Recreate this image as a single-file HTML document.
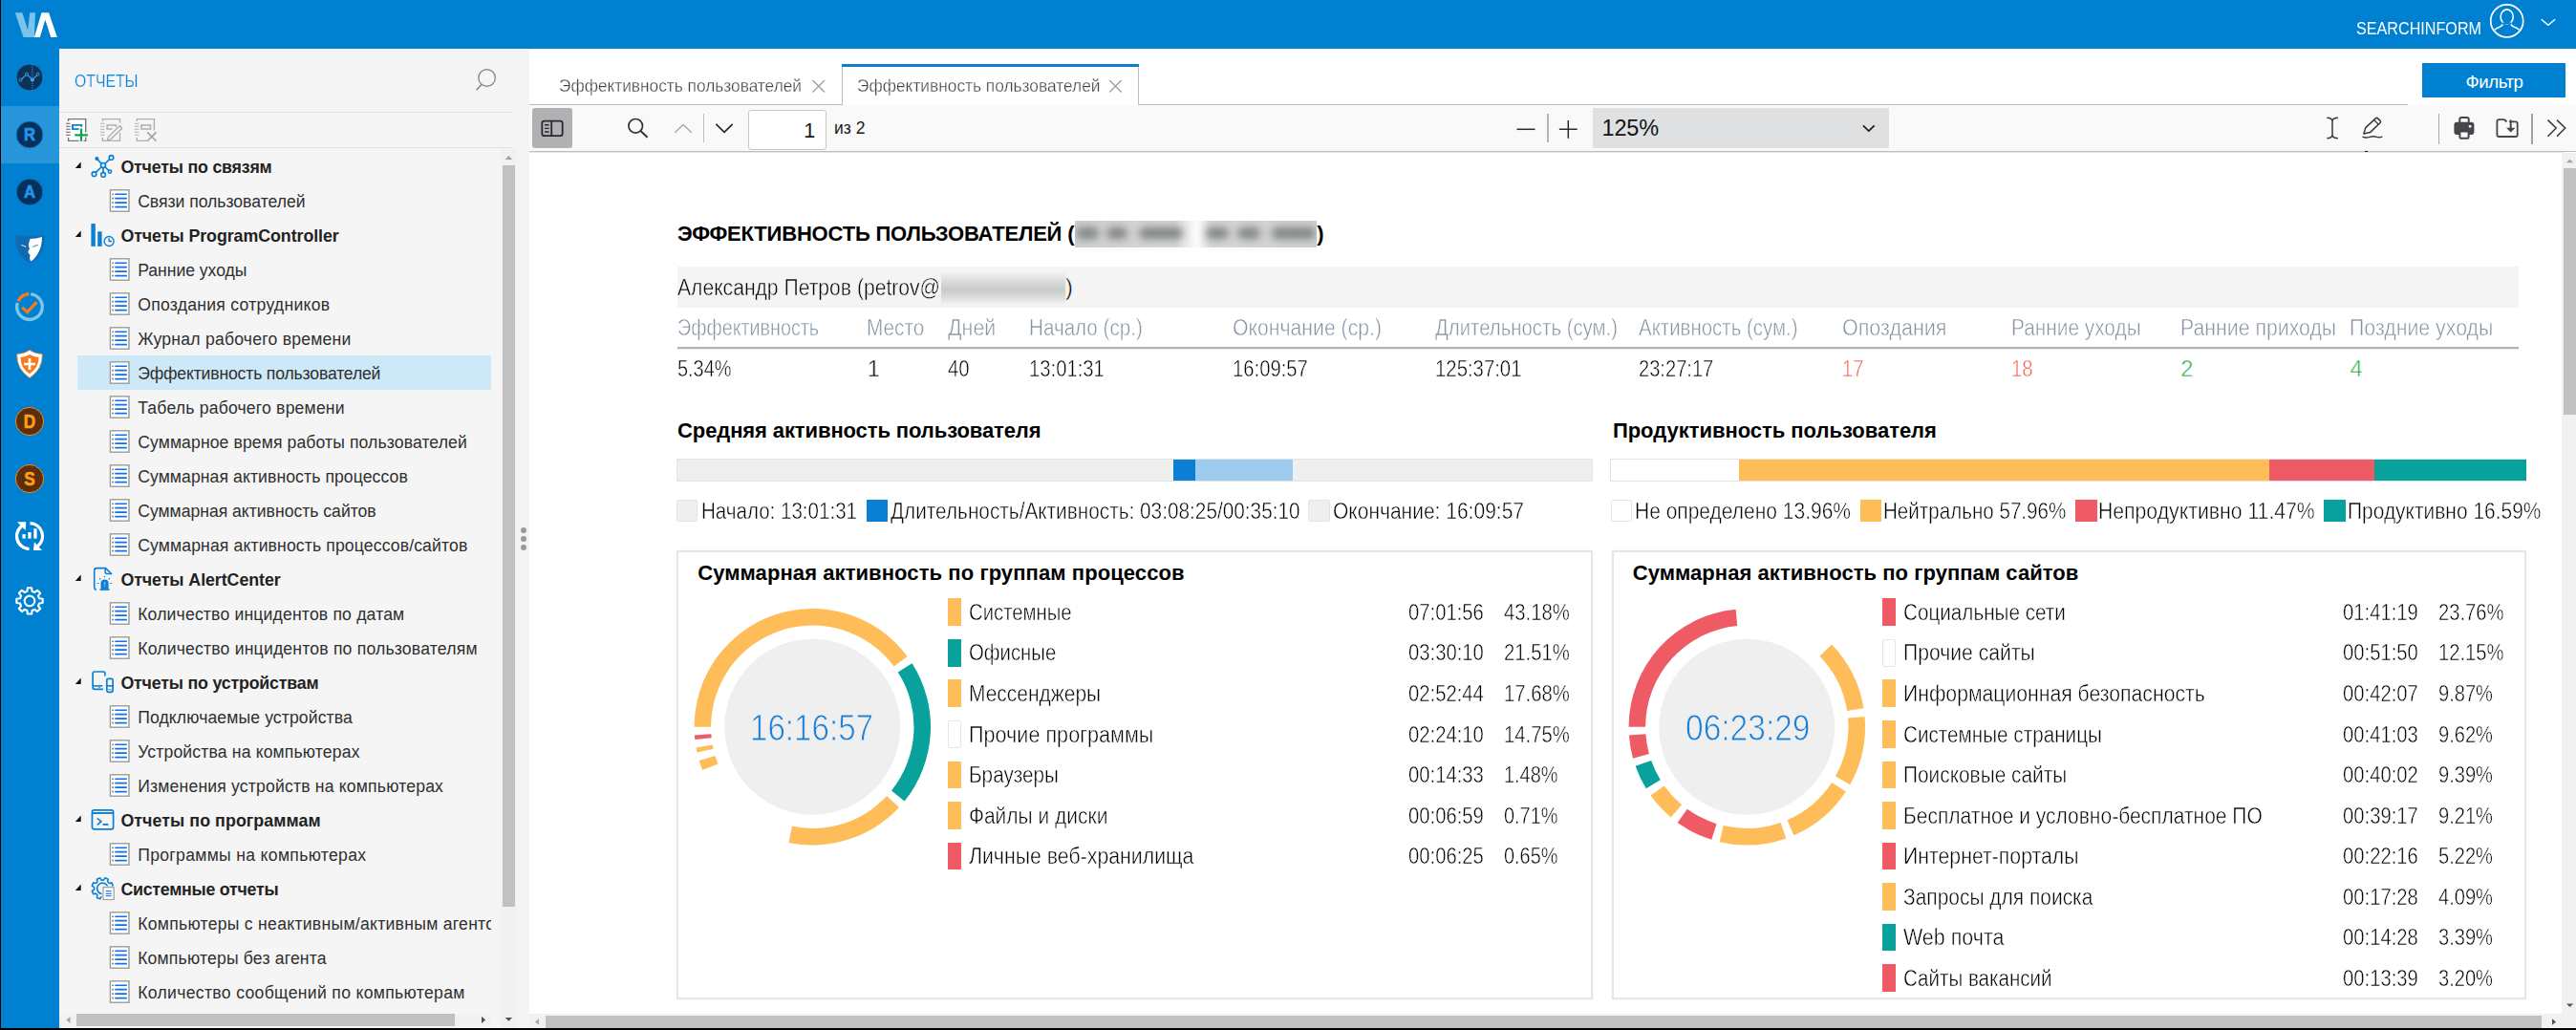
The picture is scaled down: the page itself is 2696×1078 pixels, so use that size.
<!DOCTYPE html>
<html><head><meta charset="utf-8"><title>Reports</title>
<style>
html,body{margin:0;padding:0;}
body{width:2696px;height:1078px;overflow:hidden;background:#fff;position:relative;font-family:"Liberation Sans",sans-serif;}
.b{position:absolute;display:block;}
.t{position:absolute;white-space:nowrap;line-height:1;display:block;}
</style></head><body>
<div class="b" style="left:0.00px;top:0.00px;width:2696.00px;height:51.00px;background:#0080d0;"></div>
<div class="b" style="left:0.00px;top:51.00px;width:62.00px;height:1027.00px;background:#0080d0;"></div>
<div class="b" style="left:0.00px;top:111.00px;width:62.00px;height:59.50px;background:#2795da;"></div>
<div class="b" style="left:0.00px;top:0.00px;width:1.00px;height:1078.00px;background:#000;"></div>
<svg class="b" style="left:12px;top:10px;" width="52" height="32" viewBox="12 10 52 32"><path d="M15.800 13.300L23.400 13.300L29.100 31.500L31.200 13.300L37 13.300L35.900 39.100L24.500 39.100Z" fill="#7cc3ea"/><path d="M35.900 39.100L43.500 13.300L51.100 13.300L59.800 39.100L53.300 39.100L47.300 20.700L41.800 39.100Z" fill="#fff"/></svg>
<span class="t" id="t1" style="left:2466.00px;top:20px;line-height:20px;font-size:17.60px;color:#fff;transform:scaleX(0.9179);transform-origin:0 0;">SEARCHINFORM</span>
<svg class="b" style="left:2604px;top:2px;" width="40" height="40" viewBox="2604 2 40 40"><circle cx="2623.700" cy="21.900" r="17" fill="none" stroke="#fff" stroke-width="1.700"/><ellipse cx="2623.700" cy="17.600" rx="6.600" ry="7.700" fill="none" stroke="#fff" stroke-width="1.600"/><path d="M2619.900 24C2619.600 26.500 2618.500 27.300 2616 28.200C2613.500 29 2612 29.800 2610.800 31.300" fill="none" stroke="#fff" stroke-width="1.600"/><path d="M2627.500 24C2627.800 26.500 2628.900 27.300 2631.400 28.200C2633.900 29 2635.400 29.800 2636.600 31.300" fill="none" stroke="#fff" stroke-width="1.600"/><rect x="2619" y="23.400" width="9.400" height="2.200" fill="#0080d0"/></svg>
<svg class="b" style="left:2656px;top:16px;" width="22" height="16" viewBox="2656 16 22 16"><path d="M2659.700 20.300L2666.900 26.300L2674.200 20.300" fill="none" stroke="#fff" stroke-width="1.400"/></svg>
<svg class="b" style="left:13px;top:63px;" width="36" height="36" viewBox="13 63 36 36"><circle cx="31" cy="81" r="14" fill="#0b3358" stroke="#1689dc" stroke-width="0.800"/><path d="M33.900 67.500V94.500" stroke="#4aa6e6" stroke-width="0.900" stroke-dasharray="1.200 1.200"/><path d="M21.700 83.700L28 77.700L33.900 83.500L39.700 77.700" fill="none" stroke="#4aa6e6" stroke-width="1.100"/><circle cx="21.700" cy="83.700" r="1.500" fill="#0b3358" stroke="#4aa6e6" stroke-width="0.900"/><circle cx="28" cy="77.700" r="1.500" fill="#0b3358" stroke="#4aa6e6" stroke-width="0.900"/><circle cx="33.900" cy="83.500" r="2" fill="#4aa6e6"/><circle cx="39.700" cy="77.700" r="1.500" fill="#0b3358" stroke="#4aa6e6" stroke-width="0.900"/></svg>
<svg class="b" style="left:13px;top:122.8px;" width="36" height="36" viewBox="13 122.8 36 36"><circle cx="31" cy="140.8" r="13.9" fill="#06315a" stroke="#0f74c4" stroke-width="1"/><text transform="translate(31 146.82) scale(0.95 1)" text-anchor="middle" font-family="Liberation Sans, sans-serif" font-weight="bold" font-size="17.5" fill="#2496ea" stroke="#2496ea" stroke-width="0.600">R</text></svg>
<svg class="b" style="left:13px;top:183px;" width="36" height="36" viewBox="13 183 36 36"><circle cx="31" cy="201" r="13.9" fill="#06315a" stroke="#0f74c4" stroke-width="1"/><text transform="translate(31 207.02) scale(0.95 1)" text-anchor="middle" font-family="Liberation Sans, sans-serif" font-weight="bold" font-size="17.5" fill="#2496ea" stroke="#2496ea" stroke-width="0.600">A</text></svg>
<svg class="b" style="left:13px;top:243px;" width="36" height="36" viewBox="13 243 36 36"><path d="M16.100 246.300Q31 249.200 46.200 246.300Q46.800 261 39.500 269.500Q35.500 273.800 31.500 275Q27 273.500 23 268.800Q16.300 260.500 16.100 246.300Z" fill="#1467b1"/><path d="M31.500 250.100Q38 249.600 44 247.900Q43.800 255 42.500 259Q39.500 268.500 32.600 273.500Q30.800 272 31.200 269.600L31.500 267L29.100 263.700L31 260.400Q29.500 257 29.900 255.500Q30.800 252.500 31.500 250.100Z" fill="#fff"/><path d="M22.300 256.600Q25 256.800 27.200 258.500" stroke="#fff" stroke-width="0.900" fill="none"/><path d="M34.200 258.500Q36.500 256.800 39.700 256.600" stroke="#1467b1" stroke-width="0.900" fill="none"/></svg>
<svg class="b" style="left:13px;top:303px;" width="36" height="36" viewBox="13 303 36 36"><path d="M32.16 307.85 A13.3 13.3 0 1 1 18.35 316.99" fill="none" stroke="#7cc6ec" stroke-width="3.400"/><path d="M19.05 315.27 A13.3 13.3 0 0 1 30.30 307.82" fill="none" stroke="#f47b20" stroke-width="3.400"/><path d="M23.200 321.600L28.500 326.700L38.500 316.200" fill="none" stroke="#f47b20" stroke-width="3.300"/></svg>
<svg class="b" style="left:13px;top:363px;" width="36" height="36" viewBox="13 363 36 36"><path d="M31 366.400Q36 370 44.200 370.500Q45 386 31 395.600Q17 386 17.800 370.500Q26 370 31 366.400Z" fill="#fff" stroke="#f47b20" stroke-width="0.800"/><path d="M31 371Q35 373.500 40.500 374Q40.800 384.500 31 391.300Q21.200 384.500 21.500 374Q27 373.500 31 371Z" fill="#f57c1f"/><path d="M31 375V387M25 381H37" stroke="#fff" stroke-width="2.700"/></svg>
<svg class="b" style="left:13px;top:423.1px;" width="36" height="36" viewBox="13 423.1 36 36"><circle cx="31" cy="441.1" r="14.6" fill="#5c2e0b" stroke="#f08a1a" stroke-width="1"/><text transform="translate(31 447.808) scale(0.88 1)" text-anchor="middle" font-family="Liberation Sans, sans-serif" font-weight="bold" font-size="19.5" fill="#ff9d1c" stroke="#ff9d1c" stroke-width="0.600">D</text></svg>
<svg class="b" style="left:13px;top:483px;" width="36" height="36" viewBox="13 483 36 36"><circle cx="31" cy="501" r="14.6" fill="#5c2e0b" stroke="#f08a1a" stroke-width="1"/><text transform="translate(31 507.708) scale(0.88 1)" text-anchor="middle" font-family="Liberation Sans, sans-serif" font-weight="bold" font-size="19.5" fill="#ff9d1c" stroke="#ff9d1c" stroke-width="0.600">S</text></svg>
<svg class="b" style="left:13px;top:543px;" width="36" height="36" viewBox="13 543 36 36"><path d="M30.53 574.59 A13.5 13.5 0 0 1 25.51 548.77" fill="none" stroke="#fff" stroke-width="3.300"/><path d="M31.47 547.61 A13.5 13.5 0 0 1 39.68 571.44" fill="none" stroke="#fff" stroke-width="3.300"/><path d="M18 546.200L27.300 546.200L26.600 555Z" fill="#fff"/><path d="M34.800 576L44 576L35.900 567.300Z" fill="#fff"/><rect x="23.400" y="559.100" width="3.300" height="4.500" fill="#fff"/><rect x="29.300" y="557" width="3.300" height="6.600" fill="#fff"/><rect x="35.300" y="553.200" width="3.300" height="10.400" fill="#fff"/></svg>
<svg class="b" style="left:13px;top:611px;" width="36" height="36" viewBox="13 611 36 36"><path d="M28.84 615.27 L33.16 615.27 L33.59 618.83 L36.29 619.95 L39.11 617.74 L42.16 620.79 L39.95 623.61 L41.07 626.31 L44.63 626.74 L44.63 631.06 L41.07 631.49 L39.95 634.19 L42.16 637.01 L39.11 640.06 L36.29 637.85 L33.59 638.97 L33.16 642.53 L28.84 642.53 L28.41 638.97 L25.71 637.85 L22.89 640.06 L19.84 637.01 L22.05 634.19 L20.93 631.49 L17.37 631.06 L17.37 626.74 L20.93 626.31 L22.05 623.61 L19.84 620.79 L22.89 617.74 L25.71 619.95 L28.41 618.83Z" fill="none" stroke="#fff" stroke-width="2.100" stroke-linejoin="round"/><circle cx="31" cy="628.900" r="5.300" fill="none" stroke="#fff" stroke-width="2.100"/></svg>
<div class="b" style="left:554.00px;top:51.00px;width:2142.00px;height:1027.00px;background:#fff;"></div>
<div class="b" style="left:554.00px;top:108.50px;width:1966.00px;height:1.50px;background:#b9b9b9;"></div>
<span class="t" id="t2" style="left:584.80px;top:79px;line-height:21px;font-size:18.70px;color:#444;transform:scaleX(0.9254);transform-origin:0 0;-webkit-text-stroke:0.30px #fff;">Эффективность пользователей</span>
<svg class="b" style="left:848px;top:81px;" width="18" height="18" viewBox="848 81 18 18"><path d="M850.500 84L863 96.500M863 84L850.500 96.500" stroke="#9a9a9a" stroke-width="1.200"/></svg>
<div class="b" style="left:881.00px;top:67.00px;width:311.30px;height:43.00px;background:#fff;border-left:1.300px solid #bdbdbd;border-right:1.300px solid #bdbdbd;box-sizing:border-box;"></div>
<div class="b" style="left:881.00px;top:67.00px;width:311.30px;height:3.00px;background:#0a7fd0;"></div>
<span class="t" id="t3" style="left:896.60px;top:79px;line-height:21px;font-size:18.70px;color:#444;transform:scaleX(0.9272);transform-origin:0 0;-webkit-text-stroke:0.30px #fff;">Эффективность пользователей</span>
<svg class="b" style="left:1159px;top:81px;" width="18" height="18" viewBox="1159 81 18 18"><path d="M1161.200 84L1173.700 96.500M1173.700 84L1161.200 96.500" stroke="#9a9a9a" stroke-width="1.200"/></svg>
<div class="b" style="left:2535.00px;top:66.00px;width:150.00px;height:36.00px;background:#0080d0;"></div>
<span class="t" id="t4" style="left:2580.50px;top:75px;line-height:21px;font-size:18.70px;color:#fff;letter-spacing:-0.464px;">Фильтр</span>
<div class="b" style="left:62.00px;top:51.00px;width:492.00px;height:1027.00px;background:#f5f5f5;"></div>
<span class="t" id="t5" style="left:77.50px;top:74px;line-height:21px;font-size:18.50px;color:#0f86d8;transform:scaleX(0.8521);transform-origin:0 0;-webkit-text-stroke:0.20px #f5f5f5;">ОТЧЕТЫ</span>
<svg class="b" style="left:494px;top:68px;" width="30" height="30" viewBox="494 68 30 30"><circle cx="509.600" cy="81.500" r="8.800" fill="none" stroke="#8a8a8a" stroke-width="1.400"/><path d="M504 88.200L498.700 94.200" stroke="#8a8a8a" stroke-width="1.600"/></svg>
<div class="b" style="left:62.00px;top:116.50px;width:474.00px;height:1.50px;background:#e2e2e2;"></div>
<div class="b" style="left:62.00px;top:153.50px;width:474.00px;height:1.50px;background:#e2e2e2;"></div>
<svg class="b" style="left:62px;top:118px;" width="120" height="35" viewBox="62 118 120 35"><rect x="71.6" y="124.600" width="18.100" height="22.800" fill="#fff"/><path d="M71.6 127V124.600H89.7V138.5" fill="none" stroke="#777" stroke-width="1.400"/><path d="M71.6 144V147.400H82.7" fill="none" stroke="#777" stroke-width="1.400"/><path d="M69.2 129.3H73.7" stroke="#777" stroke-width="1.200"/><path d="M69.2 132.3H73.7" stroke="#777" stroke-width="1.200"/><path d="M69.2 135.3H73.7" stroke="#777" stroke-width="1.200"/><path d="M69.2 138.3H73.7" stroke="#777" stroke-width="1.200"/><path d="M69.2 141.3H73.7" stroke="#777" stroke-width="1.200"/><path d="M89.700 143.500V147.400H87.500" fill="none" stroke="#777" stroke-width="1.400"/><path d="M85.300 132.700V130.900H76V135.100H82.600" fill="none" stroke="#0a84d6" stroke-width="1.900"/><path d="M85 134.600V147.800M78.300 141.300H91.900" stroke="#0ca348" stroke-width="2.200"/><path d="M107.4 127V124.600H125.5V128.5" fill="none" stroke="#b0b0b0" stroke-width="1.400"/><path d="M107.4 144V147.400H118.5" fill="none" stroke="#b0b0b0" stroke-width="1.400"/><path d="M105 129.3H109.5" stroke="#bcbcbc" stroke-width="1.200"/><path d="M105 132.3H109.5" stroke="#bcbcbc" stroke-width="1.200"/><path d="M105 135.3H109.5" stroke="#bcbcbc" stroke-width="1.200"/><path d="M105 138.3H109.5" stroke="#bcbcbc" stroke-width="1.200"/><path d="M105 141.3H109.5" stroke="#bcbcbc" stroke-width="1.200"/><path d="M125.500 139V147.400H117" fill="none" stroke="#b0b0b0" stroke-width="1.300"/><path d="M121.400 133V130.900H112.100V135.100H117.500" fill="none" stroke="#b0b0b0" stroke-width="1.500"/><path d="M125.200 131.800L127.800 134.300L115.800 145.800L112.300 147L113.300 143.400Z" fill="#f5f5f5" stroke="#a8a8a8" stroke-width="1.200" stroke-linejoin="round"/><path d="M143.3 127V124.600H161.4V136.5" fill="none" stroke="#b0b0b0" stroke-width="1.400"/><path d="M143.3 144V147.400H154.4" fill="none" stroke="#b0b0b0" stroke-width="1.400"/><path d="M140.9 129.3H145.4" stroke="#bcbcbc" stroke-width="1.200"/><path d="M140.9 132.3H145.4" stroke="#bcbcbc" stroke-width="1.200"/><path d="M140.9 135.3H145.4" stroke="#bcbcbc" stroke-width="1.200"/><path d="M140.9 138.3H145.4" stroke="#bcbcbc" stroke-width="1.200"/><path d="M140.9 141.3H145.4" stroke="#bcbcbc" stroke-width="1.200"/><path d="M147.900 130.900H157.500V135.100H147.900Z" fill="none" stroke="#b0b0b0" stroke-width="1.500"/><path d="M154.200 138.400L163.500 147.700M163.500 138.400L154.200 147.700" stroke="#a0a0a0" stroke-width="1.500"/></svg>
<div class="b" style="left:62px;top:155px;width:452px;height:905px;overflow:hidden;">
<svg class="b" style="left:16.00px;top:13.50px;" width="8" height="8" viewBox="0 0 8 8"><path d="M6.700 0.600V6.900H0.800Z" fill="#111"/></svg>
<svg class="b" style="left:32.50px;top:6.00px;" width="26" height="26" viewBox="0 0 26 26"><path d="M13 12L6.400 5.100M13 12L21.500 3.900M13 12L3.500 21.200M13 12L13.100 21.900M13 12L20 18.600" stroke="#0a7fd4" stroke-width="1.700" fill="none"/><circle cx="13" cy="12" r="2.5" fill="#f5f5f5" stroke="#0a7fd4" stroke-width="1.7"/><circle cx="21.5" cy="3.9" r="2.3" fill="#f5f5f5" stroke="#0a7fd4" stroke-width="1.6"/><circle cx="6.400" cy="5.100" r="2.100" fill="#0a7fd4"/><circle cx="3.5" cy="21.2" r="2.3" fill="#f5f5f5" stroke="#0a7fd4" stroke-width="1.6"/><circle cx="13.1" cy="21.9" r="2.3" fill="#f5f5f5" stroke="#0a7fd4" stroke-width="1.6"/><circle cx="20" cy="18.6" r="1.6" fill="#f5f5f5" stroke="#0a7fd4" stroke-width="1.5"/></svg>
<span class="t" id="t6" style="left:64.40px;top:10px;line-height:20px;font-size:17.80px;color:#222;font-weight:bold;letter-spacing:-0.190px;">Отчеты по связям</span>
<svg class="b" style="left:52.00px;top:37.00px;" width="23" height="36" viewBox="0 0 23 36"><rect x="1.400" y="6.800" width="19.600" height="22.400" fill="#fff" stroke="#9b9b9b" stroke-width="1.400"/><path d="M6.900 11.200H18.200M6.900 15.650H18.200M6.900 20.150H18.200M6.900 24.650H18.200" stroke="#0d6ff2" stroke-width="1.600" stroke-linecap="round"/><path d="M3.300 11.200H4.900M3.300 15.650H4.900M3.300 20.150H4.900M3.300 24.650H4.900" stroke="#777" stroke-width="1.600"/></svg>
<span class="t" id="t7" style="left:82.20px;top:46px;line-height:20px;font-size:17.60px;color:#303030;letter-spacing:-0.020px;">Связи пользователей</span>
<svg class="b" style="left:16.00px;top:85.50px;" width="8" height="8" viewBox="0 0 8 8"><path d="M6.700 0.600V6.900H0.800Z" fill="#111"/></svg>
<svg class="b" style="left:32.50px;top:78.00px;" width="26" height="26" viewBox="0 0 26 26"><rect x="0.400" y="1.100" width="4.400" height="23.800" fill="#0a7fd4"/><rect x="7.200" y="9.300" width="4.400" height="15.600" fill="#0a7fd4"/><circle cx="19.100" cy="19.500" r="5" fill="none" stroke="#0a7fd4" stroke-width="1.300"/><path d="M19.100 16.300V19.500H22" fill="none" stroke="#0a7fd4" stroke-width="1.300"/></svg>
<span class="t" id="t8" style="left:64.40px;top:82px;line-height:20px;font-size:17.80px;color:#222;font-weight:bold;letter-spacing:-0.047px;">Отчеты ProgramController</span>
<svg class="b" style="left:52.00px;top:109.00px;" width="23" height="36" viewBox="0 0 23 36"><rect x="1.400" y="6.800" width="19.600" height="22.400" fill="#fff" stroke="#9b9b9b" stroke-width="1.400"/><path d="M6.900 11.200H18.200M6.900 15.650H18.200M6.900 20.150H18.200M6.900 24.650H18.200" stroke="#0d6ff2" stroke-width="1.600" stroke-linecap="round"/><path d="M3.300 11.200H4.900M3.300 15.650H4.900M3.300 20.150H4.900M3.300 24.650H4.900" stroke="#777" stroke-width="1.600"/></svg>
<span class="t" id="t9" style="left:82.20px;top:118px;line-height:20px;font-size:17.60px;color:#303030;letter-spacing:-0.032px;">Ранние уходы</span>
<svg class="b" style="left:52.00px;top:145.00px;" width="23" height="36" viewBox="0 0 23 36"><rect x="1.400" y="6.800" width="19.600" height="22.400" fill="#fff" stroke="#9b9b9b" stroke-width="1.400"/><path d="M6.900 11.200H18.200M6.900 15.650H18.200M6.900 20.150H18.200M6.900 24.650H18.200" stroke="#0d6ff2" stroke-width="1.600" stroke-linecap="round"/><path d="M3.300 11.200H4.900M3.300 15.650H4.900M3.300 20.150H4.900M3.300 24.650H4.900" stroke="#777" stroke-width="1.600"/></svg>
<span class="t" id="t10" style="left:82.20px;top:154px;line-height:20px;font-size:17.60px;color:#303030;letter-spacing:0.263px;">Опоздания сотрудников</span>
<svg class="b" style="left:52.00px;top:181.00px;" width="23" height="36" viewBox="0 0 23 36"><rect x="1.400" y="6.800" width="19.600" height="22.400" fill="#fff" stroke="#9b9b9b" stroke-width="1.400"/><path d="M6.900 11.200H18.200M6.900 15.650H18.200M6.900 20.150H18.200M6.900 24.650H18.200" stroke="#0d6ff2" stroke-width="1.600" stroke-linecap="round"/><path d="M3.300 11.200H4.900M3.300 15.650H4.900M3.300 20.150H4.900M3.300 24.650H4.900" stroke="#777" stroke-width="1.600"/></svg>
<span class="t" id="t11" style="left:82.20px;top:190px;line-height:20px;font-size:17.60px;color:#303030;letter-spacing:0.229px;">Журнал рабочего времени</span>
<div class="b" style="left:19.00px;top:217.00px;width:433.00px;height:36.00px;background:#cde8f7;"></div>
<svg class="b" style="left:52.00px;top:217.00px;" width="23" height="36" viewBox="0 0 23 36"><rect x="1.400" y="6.800" width="19.600" height="22.400" fill="#fff" stroke="#9b9b9b" stroke-width="1.400"/><path d="M6.900 11.200H18.200M6.900 15.650H18.200M6.900 20.150H18.200M6.900 24.650H18.200" stroke="#0d6ff2" stroke-width="1.600" stroke-linecap="round"/><path d="M3.300 11.200H4.900M3.300 15.650H4.900M3.300 20.150H4.900M3.300 24.650H4.900" stroke="#777" stroke-width="1.600"/></svg>
<span class="t" id="t12" style="left:82.20px;top:226px;line-height:20px;font-size:17.60px;color:#303030;letter-spacing:-0.160px;">Эффективность пользователей</span>
<svg class="b" style="left:52.00px;top:253.00px;" width="23" height="36" viewBox="0 0 23 36"><rect x="1.400" y="6.800" width="19.600" height="22.400" fill="#fff" stroke="#9b9b9b" stroke-width="1.400"/><path d="M6.900 11.200H18.200M6.900 15.650H18.200M6.900 20.150H18.200M6.900 24.650H18.200" stroke="#0d6ff2" stroke-width="1.600" stroke-linecap="round"/><path d="M3.300 11.200H4.900M3.300 15.650H4.900M3.300 20.150H4.900M3.300 24.650H4.900" stroke="#777" stroke-width="1.600"/></svg>
<span class="t" id="t13" style="left:82.20px;top:262px;line-height:20px;font-size:17.60px;color:#303030;letter-spacing:0.192px;">Табель рабочего времени</span>
<svg class="b" style="left:52.00px;top:289.00px;" width="23" height="36" viewBox="0 0 23 36"><rect x="1.400" y="6.800" width="19.600" height="22.400" fill="#fff" stroke="#9b9b9b" stroke-width="1.400"/><path d="M6.900 11.200H18.200M6.900 15.650H18.200M6.900 20.150H18.200M6.900 24.650H18.200" stroke="#0d6ff2" stroke-width="1.600" stroke-linecap="round"/><path d="M3.300 11.200H4.900M3.300 15.650H4.900M3.300 20.150H4.900M3.300 24.650H4.900" stroke="#777" stroke-width="1.600"/></svg>
<span class="t" id="t14" style="left:82.20px;top:298px;line-height:20px;font-size:17.60px;color:#303030;letter-spacing:0.108px;">Суммарное время работы пользователей</span>
<svg class="b" style="left:52.00px;top:325.00px;" width="23" height="36" viewBox="0 0 23 36"><rect x="1.400" y="6.800" width="19.600" height="22.400" fill="#fff" stroke="#9b9b9b" stroke-width="1.400"/><path d="M6.900 11.200H18.200M6.900 15.650H18.200M6.900 20.150H18.200M6.900 24.650H18.200" stroke="#0d6ff2" stroke-width="1.600" stroke-linecap="round"/><path d="M3.300 11.200H4.900M3.300 15.650H4.900M3.300 20.150H4.900M3.300 24.650H4.900" stroke="#777" stroke-width="1.600"/></svg>
<span class="t" id="t15" style="left:82.20px;top:334px;line-height:20px;font-size:17.60px;color:#303030;letter-spacing:0.090px;">Суммарная активность процессов</span>
<svg class="b" style="left:52.00px;top:361.00px;" width="23" height="36" viewBox="0 0 23 36"><rect x="1.400" y="6.800" width="19.600" height="22.400" fill="#fff" stroke="#9b9b9b" stroke-width="1.400"/><path d="M6.900 11.200H18.200M6.900 15.650H18.200M6.900 20.150H18.200M6.900 24.650H18.200" stroke="#0d6ff2" stroke-width="1.600" stroke-linecap="round"/><path d="M3.300 11.200H4.900M3.300 15.650H4.900M3.300 20.150H4.900M3.300 24.650H4.900" stroke="#777" stroke-width="1.600"/></svg>
<span class="t" id="t16" style="left:82.20px;top:370px;line-height:20px;font-size:17.60px;color:#303030;letter-spacing:-0.008px;">Суммарная активность сайтов</span>
<svg class="b" style="left:52.00px;top:397.00px;" width="23" height="36" viewBox="0 0 23 36"><rect x="1.400" y="6.800" width="19.600" height="22.400" fill="#fff" stroke="#9b9b9b" stroke-width="1.400"/><path d="M6.900 11.200H18.200M6.900 15.650H18.200M6.900 20.150H18.200M6.900 24.650H18.200" stroke="#0d6ff2" stroke-width="1.600" stroke-linecap="round"/><path d="M3.300 11.200H4.900M3.300 15.650H4.900M3.300 20.150H4.900M3.300 24.650H4.900" stroke="#777" stroke-width="1.600"/></svg>
<span class="t" id="t17" style="left:82.20px;top:406px;line-height:20px;font-size:17.60px;color:#303030;letter-spacing:0.133px;">Суммарная активность процессов/сайтов</span>
<svg class="b" style="left:16.00px;top:445.50px;" width="8" height="8" viewBox="0 0 8 8"><path d="M6.700 0.600V6.900H0.800Z" fill="#111"/></svg>
<svg class="b" style="left:32.50px;top:438.00px;" width="26" height="26" viewBox="0 0 26 26"><path d="M5.600 24.500Q3.700 23.500 3.700 21.500V4Q3.700 1.650 6 1.650H15.500L22 8" fill="none" stroke="#0a7fd4" stroke-width="1.600"/><path d="M15.200 2V5.500Q15.200 7.500 17.200 7.500H21.700" fill="none" stroke="#0a7fd4" stroke-width="1.500"/><path d="M10.500 23V17.500Q10.500 13.500 14.550 13.500Q18.600 13.500 18.600 17.500V23Z" fill="#0a7fd4"/><rect x="9.600" y="23.100" width="9.800" height="1.800" fill="#0a7fd4"/><rect x="13.800" y="16" width="1.500" height="3.200" fill="#7fc0ee"/><rect x="13.800" y="20" width="1.500" height="1" fill="#7fc0ee"/><path d="M14.400 10V11.300M9.200 12.200L10.200 13.500M19.700 12.200L18.700 13.500M6.900 17.500H8.600M20.400 17.500H22.100" stroke="#0a7fd4" stroke-width="1.200"/></svg>
<span class="t" id="t18" style="left:64.40px;top:442px;line-height:20px;font-size:17.80px;color:#222;font-weight:bold;letter-spacing:-0.055px;">Отчеты AlertCenter</span>
<svg class="b" style="left:52.00px;top:469.00px;" width="23" height="36" viewBox="0 0 23 36"><rect x="1.400" y="6.800" width="19.600" height="22.400" fill="#fff" stroke="#9b9b9b" stroke-width="1.400"/><path d="M6.900 11.200H18.200M6.900 15.650H18.200M6.900 20.150H18.200M6.900 24.650H18.200" stroke="#0d6ff2" stroke-width="1.600" stroke-linecap="round"/><path d="M3.300 11.200H4.900M3.300 15.650H4.900M3.300 20.150H4.900M3.300 24.650H4.900" stroke="#777" stroke-width="1.600"/></svg>
<span class="t" id="t19" style="left:82.20px;top:478px;line-height:20px;font-size:17.60px;color:#303030;letter-spacing:0.171px;">Количество инцидентов по датам</span>
<svg class="b" style="left:52.00px;top:505.00px;" width="23" height="36" viewBox="0 0 23 36"><rect x="1.400" y="6.800" width="19.600" height="22.400" fill="#fff" stroke="#9b9b9b" stroke-width="1.400"/><path d="M6.900 11.200H18.200M6.900 15.650H18.200M6.900 20.150H18.200M6.900 24.650H18.200" stroke="#0d6ff2" stroke-width="1.600" stroke-linecap="round"/><path d="M3.300 11.200H4.900M3.300 15.650H4.900M3.300 20.150H4.900M3.300 24.650H4.900" stroke="#777" stroke-width="1.600"/></svg>
<span class="t" id="t20" style="left:82.20px;top:514px;line-height:20px;font-size:17.60px;color:#303030;letter-spacing:0.193px;">Количество инцидентов по пользователям</span>
<svg class="b" style="left:16.00px;top:553.50px;" width="8" height="8" viewBox="0 0 8 8"><path d="M6.700 0.600V6.900H0.800Z" fill="#111"/></svg>
<svg class="b" style="left:32.50px;top:546.00px;" width="26" height="26" viewBox="0 0 26 26"><path d="M12.300 20.350H4.100Q2.100 20.350 2.100 18.350V4Q2.100 2 4.100 2H12.900Q14.900 2 14.900 4V5.800" fill="none" stroke="#0a7fd4" stroke-width="1.700" stroke-linecap="round"/><path d="M2.100 16.850H12.300" stroke="#0a7fd4" stroke-width="1.600"/><circle cx="9.100" cy="18.500" r="0.800" fill="#0a7fd4"/><rect x="16.800" y="9.300" width="6.300" height="14" rx="1.500" fill="none" stroke="#0a7fd4" stroke-width="1.700"/><path d="M16.800 16.850H23.100" stroke="#0a7fd4" stroke-width="1.600"/><circle cx="18.900" cy="20.700" r="0.700" fill="#0a7fd4"/><circle cx="21" cy="20.700" r="0.700" fill="#0a7fd4"/></svg>
<span class="t" id="t21" style="left:64.40px;top:550px;line-height:20px;font-size:17.80px;color:#222;font-weight:bold;letter-spacing:-0.183px;">Отчеты по устройствам</span>
<svg class="b" style="left:52.00px;top:577.00px;" width="23" height="36" viewBox="0 0 23 36"><rect x="1.400" y="6.800" width="19.600" height="22.400" fill="#fff" stroke="#9b9b9b" stroke-width="1.400"/><path d="M6.900 11.200H18.200M6.900 15.650H18.200M6.900 20.150H18.200M6.900 24.650H18.200" stroke="#0d6ff2" stroke-width="1.600" stroke-linecap="round"/><path d="M3.300 11.200H4.900M3.300 15.650H4.900M3.300 20.150H4.900M3.300 24.650H4.900" stroke="#777" stroke-width="1.600"/></svg>
<span class="t" id="t22" style="left:82.20px;top:586px;line-height:20px;font-size:17.60px;color:#303030;letter-spacing:0.118px;">Подключаемые устройства</span>
<svg class="b" style="left:52.00px;top:613.00px;" width="23" height="36" viewBox="0 0 23 36"><rect x="1.400" y="6.800" width="19.600" height="22.400" fill="#fff" stroke="#9b9b9b" stroke-width="1.400"/><path d="M6.900 11.200H18.200M6.900 15.650H18.200M6.900 20.150H18.200M6.900 24.650H18.200" stroke="#0d6ff2" stroke-width="1.600" stroke-linecap="round"/><path d="M3.300 11.200H4.900M3.300 15.650H4.900M3.300 20.150H4.900M3.300 24.650H4.900" stroke="#777" stroke-width="1.600"/></svg>
<span class="t" id="t23" style="left:82.20px;top:622px;line-height:20px;font-size:17.60px;color:#303030;letter-spacing:0.152px;">Устройства на компьютерах</span>
<svg class="b" style="left:52.00px;top:649.00px;" width="23" height="36" viewBox="0 0 23 36"><rect x="1.400" y="6.800" width="19.600" height="22.400" fill="#fff" stroke="#9b9b9b" stroke-width="1.400"/><path d="M6.900 11.200H18.200M6.900 15.650H18.200M6.900 20.150H18.200M6.900 24.650H18.200" stroke="#0d6ff2" stroke-width="1.600" stroke-linecap="round"/><path d="M3.300 11.200H4.900M3.300 15.650H4.900M3.300 20.150H4.900M3.300 24.650H4.900" stroke="#777" stroke-width="1.600"/></svg>
<span class="t" id="t24" style="left:82.20px;top:658px;line-height:20px;font-size:17.60px;color:#303030;letter-spacing:0.183px;">Изменения устройств на компьютерах</span>
<svg class="b" style="left:16.00px;top:697.50px;" width="8" height="8" viewBox="0 0 8 8"><path d="M6.700 0.600V6.900H0.800Z" fill="#111"/></svg>
<svg class="b" style="left:32.50px;top:690.00px;" width="26" height="26" viewBox="0 0 26 26"><rect x="1.430" y="2.870" width="22.170" height="19.930" rx="2" fill="none" stroke="#0a7fd4" stroke-width="1.700"/><path d="M1.430 6H23.600" stroke="#0a7fd4" stroke-width="1.900"/><path d="M6.700 11.300L10.900 14.700L6.700 18.400" fill="none" stroke="#0a7fd4" stroke-width="1.600"/><path d="M12.600 17.900H18.400" stroke="#0a7fd4" stroke-width="1.900"/></svg>
<span class="t" id="t25" style="left:64.40px;top:694px;line-height:20px;font-size:17.80px;color:#222;font-weight:bold;letter-spacing:0.083px;">Отчеты по программам</span>
<svg class="b" style="left:52.00px;top:721.00px;" width="23" height="36" viewBox="0 0 23 36"><rect x="1.400" y="6.800" width="19.600" height="22.400" fill="#fff" stroke="#9b9b9b" stroke-width="1.400"/><path d="M6.900 11.200H18.200M6.900 15.650H18.200M6.900 20.150H18.200M6.900 24.650H18.200" stroke="#0d6ff2" stroke-width="1.600" stroke-linecap="round"/><path d="M3.300 11.200H4.900M3.300 15.650H4.900M3.300 20.150H4.900M3.300 24.650H4.900" stroke="#777" stroke-width="1.600"/></svg>
<span class="t" id="t26" style="left:82.20px;top:730px;line-height:20px;font-size:17.60px;color:#303030;letter-spacing:0.316px;">Программы на компьютерах</span>
<svg class="b" style="left:16.00px;top:769.50px;" width="8" height="8" viewBox="0 0 8 8"><path d="M6.700 0.600V6.900H0.800Z" fill="#111"/></svg>
<svg class="b" style="left:32.50px;top:762.00px;" width="26" height="26" viewBox="0 0 26 26"><path d="M14.94 1.81 L18.20 3.17 L17.64 5.80 L19.30 7.46 L21.93 6.90 L23.29 10.16 L21.02 11.63 L21.02 13.97 L23.29 15.44 L21.93 18.70 L19.30 18.14 L17.64 19.80 L18.20 22.43 L14.94 23.79 L13.47 21.52 L11.13 21.52 L9.66 23.79 L6.40 22.43 L6.96 19.80 L5.30 18.14 L2.67 18.70 L1.31 15.44 L3.58 13.97 L3.58 11.63 L1.31 10.16 L2.67 6.90 L5.30 7.46 L6.96 5.80 L6.40 3.17 L9.66 1.81 L11.13 4.08 L13.47 4.08Z" fill="none" stroke="#0a7fd4" stroke-width="1.600" stroke-linejoin="round"/><circle cx="12.300" cy="12.800" r="5.700" fill="none" stroke="#0a7fd4" stroke-width="1.700"/><rect x="11.500" y="10.500" width="14" height="15.500" fill="#f5f5f5"/><rect x="13" y="11.600" width="11.200" height="12.900" fill="#fff" stroke="#a5a5a5" stroke-width="1.300"/><path d="M15.600 15.600H21.700M15.600 18.400H21.700M15.600 20.700H21.700" stroke="#2a86e0" stroke-width="1.300"/></svg>
<span class="t" id="t27" style="left:64.40px;top:766px;line-height:20px;font-size:17.80px;color:#222;font-weight:bold;letter-spacing:-0.246px;">Системные отчеты</span>
<svg class="b" style="left:52.00px;top:793.00px;" width="23" height="36" viewBox="0 0 23 36"><rect x="1.400" y="6.800" width="19.600" height="22.400" fill="#fff" stroke="#9b9b9b" stroke-width="1.400"/><path d="M6.900 11.200H18.200M6.900 15.650H18.200M6.900 20.150H18.200M6.900 24.650H18.200" stroke="#0d6ff2" stroke-width="1.600" stroke-linecap="round"/><path d="M3.300 11.200H4.900M3.300 15.650H4.900M3.300 20.150H4.900M3.300 24.650H4.900" stroke="#777" stroke-width="1.600"/></svg>
<span class="t" id="t28" style="left:82.20px;top:802px;line-height:20px;font-size:17.60px;color:#303030;letter-spacing:0.279px;">Компьютеры с неактивным/активным агентом</span>
<svg class="b" style="left:52.00px;top:829.00px;" width="23" height="36" viewBox="0 0 23 36"><rect x="1.400" y="6.800" width="19.600" height="22.400" fill="#fff" stroke="#9b9b9b" stroke-width="1.400"/><path d="M6.900 11.200H18.200M6.900 15.650H18.200M6.900 20.150H18.200M6.900 24.650H18.200" stroke="#0d6ff2" stroke-width="1.600" stroke-linecap="round"/><path d="M3.300 11.200H4.900M3.300 15.650H4.900M3.300 20.150H4.900M3.300 24.650H4.900" stroke="#777" stroke-width="1.600"/></svg>
<span class="t" id="t29" style="left:82.20px;top:838px;line-height:20px;font-size:17.60px;color:#303030;letter-spacing:0.181px;">Компьютеры без агента</span>
<svg class="b" style="left:52.00px;top:865.00px;" width="23" height="36" viewBox="0 0 23 36"><rect x="1.400" y="6.800" width="19.600" height="22.400" fill="#fff" stroke="#9b9b9b" stroke-width="1.400"/><path d="M6.900 11.200H18.200M6.900 15.650H18.200M6.900 20.150H18.200M6.900 24.650H18.200" stroke="#0d6ff2" stroke-width="1.600" stroke-linecap="round"/><path d="M3.300 11.200H4.900M3.300 15.650H4.900M3.300 20.150H4.900M3.300 24.650H4.900" stroke="#777" stroke-width="1.600"/></svg>
<span class="t" id="t30" style="left:82.20px;top:874px;line-height:20px;font-size:17.60px;color:#303030;letter-spacing:0.325px;">Количество сообщений по компьютерам</span>
</div>
<div class="b" style="left:523.50px;top:155.00px;width:16.50px;height:921.00px;background:#f1f1f1;"></div>
<svg class="b" style="left:526px;top:160px;" width="14" height="12" viewBox="526 160 14 12"><path d="M528.600 167L532.400 162.900L536.200 167Z" fill="#a3a3a3"/></svg>
<div class="b" style="left:526.10px;top:173.00px;width:12.80px;height:775.50px;background:#c1c1c1;"></div>
<svg class="b" style="left:526px;top:1062px;" width="14" height="10" viewBox="526 1062 14 10"><path d="M528.800 1065L532.400 1068.800L536 1065Z" fill="#505050"/></svg>
<div class="b" style="left:62.00px;top:1060.80px;width:452.00px;height:13.20px;background:#f1f1f1;"></div>
<svg class="b" style="left:66px;top:1060px;" width="10" height="14" viewBox="66 1060 10 14"><path d="M73.500 1064L69.500 1067.500L73.500 1071Z" fill="#a3a3a3"/></svg>
<div class="b" style="left:79.60px;top:1061.20px;width:396.30px;height:12.50px;background:#c1c1c1;"></div>
<svg class="b" style="left:500px;top:1060px;" width="12" height="14" viewBox="500 1060 12 14"><path d="M504 1063.800L508.100 1067.400L504 1071Z" fill="#505050"/></svg>
<div class="b" style="left:540.00px;top:51.00px;width:14.00px;height:1027.00px;background:#f4f4f4;"></div>
<div class="b" style="left:544.700px;top:552.3px;width:6px;height:6px;border-radius:3px;background:#9a9a9a;"></div>
<div class="b" style="left:544.700px;top:561.2px;width:6px;height:6px;border-radius:3px;background:#9a9a9a;"></div>
<div class="b" style="left:544.700px;top:570.0px;width:6px;height:6px;border-radius:3px;background:#9a9a9a;"></div>
<div class="b" style="left:554.00px;top:110.00px;width:2142.00px;height:48.50px;background:#f9f9fa;"></div>
<div class="b" style="left:554.00px;top:158.00px;width:2142.00px;height:1.30px;background:#bfbfbf;"></div>
<div class="b" style="left:554.00px;top:159.30px;width:2129.00px;height:1.00px;background:#e6e6e6;"></div>
<div class="b" style="left:557.00px;top:113.00px;width:42.00px;height:42.00px;background:#b1b1b3;border-radius:3px;"></div>
<svg class="b" style="left:562px;top:120px;" width="32" height="28" viewBox="562 120 32 28"><rect x="567.300" y="126.600" width="21.400" height="15.600" rx="2.500" fill="none" stroke="#2a2a2e" stroke-width="1.800"/><path d="M577.200 126.600V142.200" stroke="#2a2a2e" stroke-width="1.800"/><path d="M570 130.800H574.600M570 134.400H574.600M570 138H574.600" stroke="#2a2a2e" stroke-width="1.400"/></svg>
<svg class="b" style="left:652px;top:118px;" width="32" height="32" viewBox="652 118 32 32"><circle cx="665.200" cy="131.800" r="7.300" fill="none" stroke="#333" stroke-width="1.700"/><path d="M670.400 137L677.600 143.700" stroke="#333" stroke-width="1.900"/></svg>
<svg class="b" style="left:702px;top:122px;" width="26" height="22" viewBox="702 122 26 22"><path d="M706.300 138.800L715.050 130.500L723.800 138.800" fill="none" stroke="#a8a8a8" stroke-width="1.500"/></svg>
<div class="b" style="left:735.50px;top:119.00px;width:1.40px;height:30.00px;background:#bdbdbd;"></div>
<svg class="b" style="left:745px;top:122px;" width="26" height="22" viewBox="745 122 26 22"><path d="M749.400 129.800L758.050 138.400L766.700 129.800" fill="none" stroke="#2a2a2e" stroke-width="1.700"/></svg>
<div class="b" style="left:782.50px;top:115.20px;width:82.00px;height:41.50px;background:#fff;border:1.500px solid #c6c6c8;border-radius:3px;box-sizing:border-box;"></div>
<span class="t" id="t31" style="left:841.30px;top:125px;line-height:24px;font-size:21.50px;color:#1a1a1a;">1</span>
<span class="t" id="t32" style="left:873.00px;top:124px;line-height:20px;font-size:17.50px;color:#1a1a1a;letter-spacing:0.023px;">из 2</span>
<svg class="b" style="left:1584px;top:124px;" width="26" height="24" viewBox="1584 124 26 24"><path d="M1587.500 135.300H1606.500" stroke="#2a2a2e" stroke-width="1.500"/></svg>
<div class="b" style="left:1619.00px;top:119.00px;width:1.50px;height:30.00px;background:#b5b5b5;"></div>
<svg class="b" style="left:1628px;top:124px;" width="26" height="24" viewBox="1628 124 26 24"><path d="M1631.900 135.300H1650.700M1641.300 126V144.700" stroke="#2a2a2e" stroke-width="1.500"/></svg>
<div class="b" style="left:1666.50px;top:113.00px;width:310.30px;height:42.00px;background:#dfe0e2;"></div>
<span class="t" id="t33" style="left:1676.50px;top:121px;line-height:26px;font-size:23.50px;color:#141414;letter-spacing:-0.152px;">125%</span>
<svg class="b" style="left:1944px;top:124px;" width="24" height="20" viewBox="1944 124 24 20"><path d="M1949.900 131.300L1955.800 137L1961.700 131.300" fill="none" stroke="#1a1a1a" stroke-width="1.700"/></svg>
<svg class="b" style="left:2430px;top:118px;" width="24" height="32" viewBox="2430 118 24 32"><path d="M2435.300 123.200Q2440.300 123.200 2441 126.500Q2441.700 123.200 2446.900 123.200M2435.300 144.700Q2440.300 144.700 2441 141.400Q2441.700 144.700 2446.900 144.700M2441 126.500V141.400" fill="none" stroke="#38383c" stroke-width="1.500"/></svg>
<svg class="b" style="left:2468px;top:118px;" width="30" height="32" viewBox="2468 118 30 32"><path d="M2488.300 123.600L2491.300 126.600Q2492 127.500 2491.300 128.300L2480.500 138.600L2473.900 140L2475.800 133.600L2486.600 123.600Q2487.500 122.900 2488.300 123.600Z" fill="none" stroke="#38383c" stroke-width="1.500" stroke-linejoin="round"/><path d="M2484.800 125.600L2489.300 130.200" stroke="#38383c" stroke-width="1.300"/><path d="M2472.500 143.200Q2476 144.800 2480 143.400Q2484 142 2487.500 143.300Q2490.500 144.400 2493.400 142.800" fill="none" stroke="#38383c" stroke-width="1.400"/></svg>
<div class="b" style="left:2474.70px;top:158.00px;width:3.30px;height:1.20px;background:#111;"></div>
<div class="b" style="left:2551.80px;top:118.50px;width:1.30px;height:32.00px;background:#a9a9a9;"></div>
<svg class="b" style="left:2566px;top:120px;" width="26" height="28" viewBox="2566 120 26 28"><rect x="2574.300" y="123.100" width="9.400" height="7" rx="1.800" fill="none" stroke="#45454a" stroke-width="2"/><rect x="2568.400" y="127.700" width="21" height="13.200" rx="3" fill="#45454a"/><rect x="2574.400" y="137.500" width="9.200" height="7.300" rx="1.300" fill="#f9f9fa" stroke="#45454a" stroke-width="2"/><rect x="2583.800" y="131" width="2.600" height="2.600" rx="0.600" fill="#f9f9fa"/></svg>
<svg class="b" style="left:2610px;top:120px;" width="28" height="28" viewBox="2610 120 28 28"><path d="M2626 127.300H2632.600Q2634.700 127.300 2634.700 129.400V140.900Q2634.700 143 2632.600 143H2615.500Q2613.400 143 2613.400 140.900V127.200Q2613.400 125.100 2615.500 125.100H2619.800Q2621 125.100 2622 126L2623.500 127.500" fill="none" stroke="#45454a" stroke-width="1.800"/><path d="M2627.700 125.500V135" stroke="#45454a" stroke-width="1.900"/><path d="M2623 133.700H2632.400L2627.700 138.600Z" fill="#45454a"/></svg>
<div class="b" style="left:2649.20px;top:118.50px;width:1.80px;height:32.00px;background:#a3a3a3;"></div>
<svg class="b" style="left:2662px;top:122px;" width="28" height="24" viewBox="2662 122 28 24"><path d="M2666.500 125.600L2675.200 134L2666.500 142.700M2676 125.600L2684.700 134L2676 142.700" fill="none" stroke="#38383c" stroke-width="1.500"/></svg>
<div class="b" style="left:2681.00px;top:160.30px;width:15.00px;height:901.00px;background:#f1f1f1;"></div>
<svg class="b" style="left:2683px;top:161px;" width="13" height="12" viewBox="2683 161 13 12"><path d="M2686 170.300L2689.600 166.800L2693.200 170.300Z" fill="#a3a3a3"/></svg>
<div class="b" style="left:2683.20px;top:175.50px;width:12.80px;height:258.30px;background:#c1c1c1;"></div>
<svg class="b" style="left:2683px;top:1047px;" width="13" height="12" viewBox="2683 1047 13 12"><path d="M2686 1050.500L2689.600 1054L2693.200 1050.500Z" fill="#505050"/></svg>
<div class="b" style="left:554.00px;top:1061.20px;width:2142.00px;height:14.50px;background:#f1f1f1;"></div>
<svg class="b" style="left:556px;top:1062px;" width="12" height="14" viewBox="556 1062 12 14"><path d="M564 1066.200L560 1069.500L564 1072.800Z" fill="#a3a3a3"/></svg>
<div class="b" style="left:571.00px;top:1062.90px;width:2088.80px;height:12.80px;background:#c1c1c1;"></div>
<svg class="b" style="left:2666px;top:1062px;" width="12" height="14" viewBox="2666 1062 12 14"><path d="M2671 1066.200L2675 1069.500L2671 1072.800Z" fill="#505050"/></svg>
<div class="b" style="left:0.00px;top:1075.70px;width:2696.00px;height:2.30px;background:#000;"></div>
<span class="t" id="t34" style="left:709.00px;top:232px;line-height:25px;font-size:22.00px;color:#000;font-weight:bold;letter-spacing:-0.192px;">ЭФФЕКТИВНОСТЬ ПОЛЬЗОВАТЕЛЕЙ (</span>
<div class="b" style="left:1125px;top:231px;width:253px;height:28px;overflow:hidden;background:linear-gradient(90deg,#cfd0d0 0%,#d6d6d6 42%,#fafafa 49.500%,#fafafa 51%,#d6d6d6 56%,#cfd0d0 100%);"><div class="b" style="left:1.0px;top:7px;width:24.0px;height:12px;background:#808385;border-radius:6px;filter:blur(4.200px);"></div><div class="b" style="left:33.0px;top:7px;width:21.6px;height:12px;background:#808385;border-radius:6px;filter:blur(4.200px);"></div><div class="b" style="left:66.6px;top:7px;width:46.4px;height:12px;background:#808385;border-radius:6px;filter:blur(4.200px);"></div><div class="b" style="left:137.4px;top:7px;width:24.1px;height:12px;background:#808385;border-radius:6px;filter:blur(4.200px);"></div><div class="b" style="left:169.7px;top:7px;width:24.1px;height:12px;background:#808385;border-radius:6px;filter:blur(4.200px);"></div><div class="b" style="left:205.7px;top:7px;width:46.3px;height:12px;background:#808385;border-radius:6px;filter:blur(4.200px);"></div></div>
<span class="t" id="t35" style="left:1378.20px;top:232px;line-height:25px;font-size:22.00px;color:#000;font-weight:bold;">)</span>
<div class="b" style="left:709.00px;top:279.00px;width:1927.00px;height:42.50px;background:#f4f4f4;"></div>
<span class="t" id="t36" style="left:709.00px;top:288px;line-height:26px;font-size:23.50px;color:#000;transform:scaleX(0.8981);transform-origin:0 0;-webkit-text-stroke:0.48px #f4f4f4;">Александр Петров (petrov@</span>
<div class="b" style="left:985px;top:284.700px;width:129.800px;height:33.500px;background:linear-gradient(180deg,#f1f1f1 0%,#dedfdf 25%,#c9cbcb 55%,#dcdddd 80%,#f0f0f0 100%);"></div>
<span class="t" id="t37" style="left:1115.00px;top:288px;line-height:26px;font-size:23.50px;color:#000;-webkit-text-stroke:0.48px #f4f4f4;">)</span>
<span class="t" id="t38" style="left:709.00px;top:330px;line-height:26px;font-size:23.50px;color:#8494a3;transform:scaleX(0.8398);transform-origin:0 0;-webkit-text-stroke:0.48px #fff;">Эффективность</span>
<span class="t" id="t39" style="left:907.40px;top:330px;line-height:26px;font-size:23.50px;color:#8494a3;transform:scaleX(0.8837);transform-origin:0 0;-webkit-text-stroke:0.48px #fff;">Место</span>
<span class="t" id="t40" style="left:992.30px;top:330px;line-height:26px;font-size:23.50px;color:#8494a3;transform:scaleX(0.9130);transform-origin:0 0;-webkit-text-stroke:0.48px #fff;">Дней</span>
<span class="t" id="t41" style="left:1077.30px;top:330px;line-height:26px;font-size:23.50px;color:#8494a3;transform:scaleX(0.8773);transform-origin:0 0;-webkit-text-stroke:0.48px #fff;">Начало (ср.)</span>
<span class="t" id="t42" style="left:1289.90px;top:330px;line-height:26px;font-size:23.50px;color:#8494a3;transform:scaleX(0.9023);transform-origin:0 0;-webkit-text-stroke:0.48px #fff;">Окончание (ср.)</span>
<span class="t" id="t43" style="left:1502.30px;top:330px;line-height:26px;font-size:23.50px;color:#8494a3;transform:scaleX(0.8666);transform-origin:0 0;-webkit-text-stroke:0.48px #fff;">Длительность (сум.)</span>
<span class="t" id="t44" style="left:1715.10px;top:330px;line-height:26px;font-size:23.50px;color:#8494a3;transform:scaleX(0.8700);transform-origin:0 0;-webkit-text-stroke:0.48px #fff;">Активность (сум.)</span>
<span class="t" id="t45" style="left:1928.00px;top:330px;line-height:26px;font-size:23.50px;color:#8494a3;transform:scaleX(0.9149);transform-origin:0 0;-webkit-text-stroke:0.48px #fff;">Опоздания</span>
<span class="t" id="t46" style="left:2105.30px;top:330px;line-height:26px;font-size:23.50px;color:#8494a3;transform:scaleX(0.8860);transform-origin:0 0;-webkit-text-stroke:0.48px #fff;">Ранние уходы</span>
<span class="t" id="t47" style="left:2282.20px;top:330px;line-height:26px;font-size:23.50px;color:#8494a3;transform:scaleX(0.9050);transform-origin:0 0;-webkit-text-stroke:0.48px #fff;">Ранние приходы</span>
<span class="t" id="t48" style="left:2459.40px;top:330px;line-height:26px;font-size:23.50px;color:#8494a3;transform:scaleX(0.9067);transform-origin:0 0;-webkit-text-stroke:0.48px #fff;">Поздние уходы</span>
<div class="b" style="left:709.00px;top:363.00px;width:1927.00px;height:2.00px;background:#b2b2b2;"></div>
<div class="b" style="left:709.00px;top:365.00px;width:1927.00px;height:1.00px;background:#e9e9e9;"></div>
<span class="t" id="t49" style="left:709.30px;top:373px;line-height:26px;font-size:23.50px;color:#000;transform:scaleX(0.8478);transform-origin:0 0;-webkit-text-stroke:0.48px #fff;">5.34%</span>
<span class="t" id="t50" style="left:907.80px;top:373px;line-height:26px;font-size:23.50px;color:#000;-webkit-text-stroke:0.48px #fff;">1</span>
<span class="t" id="t51" style="left:992.30px;top:373px;line-height:26px;font-size:23.50px;color:#000;transform:scaleX(0.8646);transform-origin:0 0;-webkit-text-stroke:0.48px #fff;">40</span>
<span class="t" id="t52" style="left:1077.30px;top:373px;line-height:26px;font-size:23.50px;color:#000;transform:scaleX(0.8613);transform-origin:0 0;-webkit-text-stroke:0.48px #fff;">13:01:31</span>
<span class="t" id="t53" style="left:1289.90px;top:373px;line-height:26px;font-size:23.50px;color:#000;transform:scaleX(0.8613);transform-origin:0 0;-webkit-text-stroke:0.48px #fff;">16:09:57</span>
<span class="t" id="t54" style="left:1502.30px;top:373px;line-height:26px;font-size:23.50px;color:#000;transform:scaleX(0.8656);transform-origin:0 0;-webkit-text-stroke:0.48px #fff;">125:37:01</span>
<span class="t" id="t55" style="left:1715.10px;top:373px;line-height:26px;font-size:23.50px;color:#000;transform:scaleX(0.8559);transform-origin:0 0;-webkit-text-stroke:0.48px #fff;">23:27:17</span>
<span class="t" id="t56" style="left:1928.00px;top:373px;line-height:26px;font-size:23.50px;color:#f0604d;transform:scaleX(0.8531);transform-origin:0 0;-webkit-text-stroke:0.48px #fff;">17</span>
<span class="t" id="t57" style="left:2105.30px;top:373px;line-height:26px;font-size:23.50px;color:#f0604d;transform:scaleX(0.8646);transform-origin:0 0;-webkit-text-stroke:0.48px #fff;">18</span>
<span class="t" id="t58" style="left:2282.20px;top:373px;line-height:26px;font-size:23.50px;color:#2aa84a;-webkit-text-stroke:0.48px #fff;">2</span>
<span class="t" id="t59" style="left:2459.40px;top:373px;line-height:26px;font-size:23.50px;color:#2aa84a;-webkit-text-stroke:0.48px #fff;">4</span>
<span class="t" id="t60" style="left:709.00px;top:438px;line-height:25px;font-size:22.00px;color:#000;font-weight:bold;letter-spacing:-0.099px;">Средняя активность пользователя</span>
<span class="t" id="t61" style="left:1687.90px;top:438px;line-height:25px;font-size:22.00px;color:#000;font-weight:bold;letter-spacing:-0.022px;">Продуктивность пользователя</span>
<div class="b" style="left:708.00px;top:480.00px;width:958.50px;height:24.00px;background:#efefef;border:1px solid #e4e4e4;box-sizing:border-box;"></div>
<div class="b" style="left:1227.60px;top:481.00px;width:23.20px;height:22.00px;background:#0a7fd3;"></div>
<div class="b" style="left:1250.80px;top:481.00px;width:102.00px;height:22.00px;background:#9dccee;"></div>
<div class="b" style="left:1685.00px;top:480.00px;width:959.00px;height:24.00px;background:#fff;border:1px solid #e4e4e4;box-sizing:border-box;"></div>
<div class="b" style="left:1820.00px;top:481.00px;width:554.60px;height:22.00px;background:#ffbd59;"></div>
<div class="b" style="left:2374.60px;top:481.00px;width:110.00px;height:22.00px;background:#ee5b64;"></div>
<div class="b" style="left:2484.60px;top:481.00px;width:159.40px;height:22.00px;background:#08a19b;"></div>
<div class="b" style="left:707.70px;top:523.30px;width:22.60px;height:22.60px;background:#efefef;border:1px solid #e4e4e4;box-sizing:border-box;border-radius:2px;"></div>
<span class="t" id="t62" style="left:733.50px;top:522px;line-height:26px;font-size:23.50px;color:#000;transform:scaleX(0.8744);transform-origin:0 0;-webkit-text-stroke:0.48px #fff;">Начало: 13:01:31</span>
<div class="b" style="left:906.60px;top:523.30px;width:22.60px;height:22.60px;background:#0a7fd3;"></div>
<span class="t" id="t63" style="left:932.00px;top:522px;line-height:26px;font-size:23.50px;color:#000;transform:scaleX(0.8841);transform-origin:0 0;-webkit-text-stroke:0.48px #fff;">Длительность/Активность: 03:08:25/00:35:10</span>
<div class="b" style="left:1369.00px;top:523.30px;width:22.60px;height:22.60px;background:#efefef;border:1px solid #e4e4e4;box-sizing:border-box;border-radius:2px;"></div>
<span class="t" id="t64" style="left:1395.00px;top:522px;line-height:26px;font-size:23.50px;color:#000;transform:scaleX(0.8932);transform-origin:0 0;-webkit-text-stroke:0.48px #fff;">Окончание: 16:09:57</span>
<div class="b" style="left:1685.70px;top:523.30px;width:22.60px;height:22.60px;background:#fff;border:1px solid #e4e4e4;box-sizing:border-box;border-radius:2px;"></div>
<span class="t" id="t65" style="left:1711.00px;top:522px;line-height:26px;font-size:23.50px;color:#000;transform:scaleX(0.8931);transform-origin:0 0;-webkit-text-stroke:0.48px #fff;">Не определено 13.96%</span>
<div class="b" style="left:1946.70px;top:523.30px;width:22.60px;height:22.60px;background:#ffbd59;"></div>
<span class="t" id="t66" style="left:1970.50px;top:522px;line-height:26px;font-size:23.50px;color:#000;transform:scaleX(0.8763);transform-origin:0 0;-webkit-text-stroke:0.48px #fff;">Нейтрально 57.96%</span>
<div class="b" style="left:2172.00px;top:523.30px;width:22.60px;height:22.60px;background:#ee5b64;"></div>
<span class="t" id="t67" style="left:2196.00px;top:522px;line-height:26px;font-size:23.50px;color:#000;transform:scaleX(0.9021);transform-origin:0 0;-webkit-text-stroke:0.48px #fff;">Непродуктивно 11.47%</span>
<div class="b" style="left:2432.00px;top:523.30px;width:22.60px;height:22.60px;background:#08a19b;"></div>
<span class="t" id="t68" style="left:2456.60px;top:522px;line-height:26px;font-size:23.50px;color:#000;transform:scaleX(0.8909);transform-origin:0 0;-webkit-text-stroke:0.48px #fff;">Продуктивно 16.59%</span>
<div class="b" style="left:707.50px;top:576.30px;width:959.00px;height:469.40px;background:#fff;border:2px solid #e6e6e6;box-sizing:border-box;box-shadow:0 0 2px rgba(0,0,0,0.06);"></div>
<div class="b" style="left:1686.70px;top:576.30px;width:957.50px;height:469.40px;background:#fff;border:2px solid #e6e6e6;box-sizing:border-box;box-shadow:0 0 2px rgba(0,0,0,0.06);"></div>
<span class="t" id="t69" style="left:730.20px;top:587px;line-height:25px;font-size:22.00px;color:#000;font-weight:bold;letter-spacing:0.082px;">Суммарная активность по группам процессов</span>
<span class="t" id="t70" style="left:1708.80px;top:587px;line-height:25px;font-size:22.00px;color:#000;font-weight:bold;letter-spacing:0.050px;">Суммарная активность по группам сайтов</span>
<svg class="b" style="left:720.00px;top:630.00px;" width="260" height="260" viewBox="0 0 260 260"><circle cx="130.300" cy="130.800" r="92" fill="#efefef"/><path d="M6.60 130.80 A123.70 123.70 0 0 1 229.63 57.07 L215.58 67.50 A106.20 106.20 0 0 0 24.10 130.80 Z" fill="#ffbd59"/><path d="M234.53 64.18 A123.70 123.70 0 0 1 226.63 208.41 L213.00 197.43 A106.20 106.20 0 0 0 219.78 73.61 Z" fill="#08a19b"/><path d="M220.98 214.94 A123.70 123.70 0 0 1 105.47 251.98 L108.99 234.84 A106.20 106.20 0 0 0 208.15 203.03 Z" fill="#ffbd59"/><path d="M15.15 176.00 A123.70 123.70 0 0 1 11.70 165.97 L28.48 160.99 A106.20 106.20 0 0 0 31.44 169.61 Z" fill="#ffbd59"/><path d="M9.54 157.61 A123.70 123.70 0 0 1 8.54 152.62 L25.76 149.53 A106.20 106.20 0 0 0 26.62 153.82 Z" fill="#ffbd59"/><path d="M7.31 144.07 A123.70 123.70 0 0 1 6.90 139.43 L24.36 138.21 A106.20 106.20 0 0 0 24.71 142.19 Z" fill="#ee5b64"/></svg>
<svg class="b" style="left:1698.00px;top:630.00px;" width="260" height="260" viewBox="0 0 260 260"><circle cx="130.300" cy="130.800" r="92" fill="#efefef"/><path d="M6.60 130.80 A123.70 123.70 0 0 1 118.60 7.65 L120.26 25.08 A106.20 106.20 0 0 0 24.10 130.80 Z" fill="#ee5b64"/><path d="M219.01 44.59 A123.70 123.70 0 0 1 252.46 111.35 L235.18 114.10 A106.20 106.20 0 0 0 206.46 56.79 Z" fill="#ffbd59"/><path d="M253.52 119.92 A123.70 123.70 0 0 1 238.28 191.14 L223.01 182.61 A106.20 106.20 0 0 0 236.09 121.46 Z" fill="#ffbd59"/><path d="M233.81 198.53 A123.70 123.70 0 0 1 179.39 244.34 L172.44 228.28 A106.20 106.20 0 0 0 219.17 188.95 Z" fill="#ffbd59"/><path d="M171.35 247.49 A123.70 123.70 0 0 1 101.62 251.13 L105.68 234.11 A106.20 106.20 0 0 0 165.54 230.98 Z" fill="#ffbd59"/><path d="M93.30 248.84 A123.70 123.70 0 0 1 57.62 230.90 L67.90 216.73 A106.20 106.20 0 0 0 98.54 232.14 Z" fill="#ee5b64"/><path d="M50.81 225.58 A123.70 123.70 0 0 1 29.54 202.56 L43.79 192.41 A106.20 106.20 0 0 0 62.06 212.17 Z" fill="#ffbd59"/><path d="M24.78 195.35 A123.70 123.70 0 0 1 13.62 171.87 L30.12 166.06 A106.20 106.20 0 0 0 39.71 186.22 Z" fill="#08a19b"/><path d="M11.04 163.63 A123.70 123.70 0 0 1 6.90 139.43 L24.36 138.21 A106.20 106.20 0 0 0 27.91 158.98 Z" fill="#ee5b64"/></svg>
<span class="t" id="t71" style="left:784.50px;top:740px;line-height:43px;font-size:38.50px;color:#1a80d6;transform:scaleX(0.8607);transform-origin:0 0;-webkit-text-stroke:0.90px #efefef;">16:16:57</span>
<span class="t" id="t72" style="left:1763.50px;top:740px;line-height:43px;font-size:38.50px;color:#1a80d6;transform:scaleX(0.8707);transform-origin:0 0;-webkit-text-stroke:0.90px #efefef;">06:23:29</span>
<div class="b" style="left:992.00px;top:626.30px;width:14.20px;height:28.70px;background:#ffbd59;"></div>
<span class="t" id="t73" style="left:1013.60px;top:628px;line-height:26px;font-size:23.50px;color:#000;transform:scaleX(0.8641);transform-origin:0 0;-webkit-text-stroke:0.48px #fff;">Системные</span>
<span class="t" id="t74" style="left:1474.30px;top:628px;line-height:26px;font-size:23.50px;color:#000;transform:scaleX(0.8613);transform-origin:0 0;-webkit-text-stroke:0.48px #fff;">07:01:56</span>
<span class="t" id="t75" style="left:1573.50px;top:628px;line-height:26px;font-size:23.50px;color:#000;transform:scaleX(0.8632);transform-origin:0 0;-webkit-text-stroke:0.48px #fff;">43.18%</span>
<div class="b" style="left:992.00px;top:668.85px;width:14.20px;height:28.70px;background:#08a19b;"></div>
<span class="t" id="t76" style="left:1013.60px;top:670px;line-height:26px;font-size:23.50px;color:#000;transform:scaleX(0.8659);transform-origin:0 0;-webkit-text-stroke:0.48px #fff;">Офисные</span>
<span class="t" id="t77" style="left:1474.30px;top:670px;line-height:26px;font-size:23.50px;color:#000;transform:scaleX(0.8613);transform-origin:0 0;-webkit-text-stroke:0.48px #fff;">03:30:10</span>
<span class="t" id="t78" style="left:1573.50px;top:670px;line-height:26px;font-size:23.50px;color:#000;transform:scaleX(0.8632);transform-origin:0 0;-webkit-text-stroke:0.48px #fff;">21.51%</span>
<div class="b" style="left:992.00px;top:711.40px;width:14.20px;height:28.70px;background:#ffbd59;"></div>
<span class="t" id="t79" style="left:1013.60px;top:713px;line-height:26px;font-size:23.50px;color:#000;transform:scaleX(0.8914);transform-origin:0 0;-webkit-text-stroke:0.48px #fff;">Мессенджеры</span>
<span class="t" id="t80" style="left:1474.30px;top:713px;line-height:26px;font-size:23.50px;color:#000;transform:scaleX(0.8613);transform-origin:0 0;-webkit-text-stroke:0.48px #fff;">02:52:44</span>
<span class="t" id="t81" style="left:1573.50px;top:713px;line-height:26px;font-size:23.50px;color:#000;transform:scaleX(0.8632);transform-origin:0 0;-webkit-text-stroke:0.48px #fff;">17.68%</span>
<div class="b" style="left:992.00px;top:753.95px;width:14.20px;height:28.70px;background:#fff;border:1px solid #e6e6e6;box-sizing:border-box;border-radius:2px;"></div>
<span class="t" id="t82" style="left:1013.60px;top:756px;line-height:26px;font-size:23.50px;color:#000;transform:scaleX(0.9193);transform-origin:0 0;-webkit-text-stroke:0.48px #fff;">Прочие программы</span>
<span class="t" id="t83" style="left:1474.30px;top:756px;line-height:26px;font-size:23.50px;color:#000;transform:scaleX(0.8613);transform-origin:0 0;-webkit-text-stroke:0.48px #fff;">02:24:10</span>
<span class="t" id="t84" style="left:1573.50px;top:756px;line-height:26px;font-size:23.50px;color:#000;transform:scaleX(0.8632);transform-origin:0 0;-webkit-text-stroke:0.48px #fff;">14.75%</span>
<div class="b" style="left:992.00px;top:796.50px;width:14.20px;height:28.70px;background:#ffbd59;"></div>
<span class="t" id="t85" style="left:1013.60px;top:798px;line-height:26px;font-size:23.50px;color:#000;transform:scaleX(0.8819);transform-origin:0 0;-webkit-text-stroke:0.48px #fff;">Браузеры</span>
<span class="t" id="t86" style="left:1474.30px;top:798px;line-height:26px;font-size:23.50px;color:#000;transform:scaleX(0.8613);transform-origin:0 0;-webkit-text-stroke:0.48px #fff;">00:14:33</span>
<span class="t" id="t87" style="left:1573.50px;top:798px;line-height:26px;font-size:23.50px;color:#000;transform:scaleX(0.8478);transform-origin:0 0;-webkit-text-stroke:0.48px #fff;">1.48%</span>
<div class="b" style="left:992.00px;top:839.05px;width:14.20px;height:28.70px;background:#ffbd59;"></div>
<span class="t" id="t88" style="left:1013.60px;top:841px;line-height:26px;font-size:23.50px;color:#000;transform:scaleX(0.8928);transform-origin:0 0;-webkit-text-stroke:0.48px #fff;">Файлы и диски</span>
<span class="t" id="t89" style="left:1474.30px;top:841px;line-height:26px;font-size:23.50px;color:#000;transform:scaleX(0.8613);transform-origin:0 0;-webkit-text-stroke:0.48px #fff;">00:06:59</span>
<span class="t" id="t90" style="left:1573.50px;top:841px;line-height:26px;font-size:23.50px;color:#000;transform:scaleX(0.8478);transform-origin:0 0;-webkit-text-stroke:0.48px #fff;">0.71%</span>
<div class="b" style="left:992.00px;top:881.60px;width:14.20px;height:28.70px;background:#ee5b64;"></div>
<span class="t" id="t91" style="left:1013.60px;top:883px;line-height:26px;font-size:23.50px;color:#000;transform:scaleX(0.9060);transform-origin:0 0;-webkit-text-stroke:0.48px #fff;">Личные веб-хранилища</span>
<span class="t" id="t92" style="left:1474.30px;top:883px;line-height:26px;font-size:23.50px;color:#000;transform:scaleX(0.8613);transform-origin:0 0;-webkit-text-stroke:0.48px #fff;">00:06:25</span>
<span class="t" id="t93" style="left:1573.50px;top:883px;line-height:26px;font-size:23.50px;color:#000;transform:scaleX(0.8478);transform-origin:0 0;-webkit-text-stroke:0.48px #fff;">0.65%</span>
<div class="b" style="left:1970.00px;top:626.30px;width:14.20px;height:28.70px;background:#ee5b64;"></div>
<span class="t" id="t94" style="left:1991.80px;top:628px;line-height:26px;font-size:23.50px;color:#000;transform:scaleX(0.8800);transform-origin:0 0;-webkit-text-stroke:0.48px #fff;">Социальные сети</span>
<span class="t" id="t95" style="left:2452.10px;top:628px;line-height:26px;font-size:23.50px;color:#000;transform:scaleX(0.8613);transform-origin:0 0;-webkit-text-stroke:0.48px #fff;">01:41:19</span>
<span class="t" id="t96" style="left:2551.90px;top:628px;line-height:26px;font-size:23.50px;color:#000;transform:scaleX(0.8594);transform-origin:0 0;-webkit-text-stroke:0.48px #fff;">23.76%</span>
<div class="b" style="left:1970.00px;top:668.85px;width:14.20px;height:28.70px;background:#fff;border:1px solid #e6e6e6;box-sizing:border-box;border-radius:2px;"></div>
<span class="t" id="t97" style="left:1991.80px;top:670px;line-height:26px;font-size:23.50px;color:#000;transform:scaleX(0.9001);transform-origin:0 0;-webkit-text-stroke:0.48px #fff;">Прочие сайты</span>
<span class="t" id="t98" style="left:2452.10px;top:670px;line-height:26px;font-size:23.50px;color:#000;transform:scaleX(0.8613);transform-origin:0 0;-webkit-text-stroke:0.48px #fff;">00:51:50</span>
<span class="t" id="t99" style="left:2551.90px;top:670px;line-height:26px;font-size:23.50px;color:#000;transform:scaleX(0.8594);transform-origin:0 0;-webkit-text-stroke:0.48px #fff;">12.15%</span>
<div class="b" style="left:1970.00px;top:711.40px;width:14.20px;height:28.70px;background:#ffbd59;"></div>
<span class="t" id="t100" style="left:1991.80px;top:713px;line-height:26px;font-size:23.50px;color:#000;transform:scaleX(0.9018);transform-origin:0 0;-webkit-text-stroke:0.48px #fff;">Информационная безопасность</span>
<span class="t" id="t101" style="left:2452.10px;top:713px;line-height:26px;font-size:23.50px;color:#000;transform:scaleX(0.8613);transform-origin:0 0;-webkit-text-stroke:0.48px #fff;">00:42:07</span>
<span class="t" id="t102" style="left:2551.90px;top:713px;line-height:26px;font-size:23.50px;color:#000;transform:scaleX(0.8553);transform-origin:0 0;-webkit-text-stroke:0.48px #fff;">9.87%</span>
<div class="b" style="left:1970.00px;top:753.95px;width:14.20px;height:28.70px;background:#ffbd59;"></div>
<span class="t" id="t103" style="left:1991.80px;top:756px;line-height:26px;font-size:23.50px;color:#000;transform:scaleX(0.8803);transform-origin:0 0;-webkit-text-stroke:0.48px #fff;">Системные страницы</span>
<span class="t" id="t104" style="left:2452.10px;top:756px;line-height:26px;font-size:23.50px;color:#000;transform:scaleX(0.8613);transform-origin:0 0;-webkit-text-stroke:0.48px #fff;">00:41:03</span>
<span class="t" id="t105" style="left:2551.90px;top:756px;line-height:26px;font-size:23.50px;color:#000;transform:scaleX(0.8553);transform-origin:0 0;-webkit-text-stroke:0.48px #fff;">9.62%</span>
<div class="b" style="left:1970.00px;top:796.50px;width:14.20px;height:28.70px;background:#ffbd59;"></div>
<span class="t" id="t106" style="left:1991.80px;top:798px;line-height:26px;font-size:23.50px;color:#000;transform:scaleX(0.8869);transform-origin:0 0;-webkit-text-stroke:0.48px #fff;">Поисковые сайты</span>
<span class="t" id="t107" style="left:2452.10px;top:798px;line-height:26px;font-size:23.50px;color:#000;transform:scaleX(0.8613);transform-origin:0 0;-webkit-text-stroke:0.48px #fff;">00:40:02</span>
<span class="t" id="t108" style="left:2551.90px;top:798px;line-height:26px;font-size:23.50px;color:#000;transform:scaleX(0.8553);transform-origin:0 0;-webkit-text-stroke:0.48px #fff;">9.39%</span>
<div class="b" style="left:1970.00px;top:839.05px;width:14.20px;height:28.70px;background:#ffbd59;"></div>
<span class="t" id="t109" style="left:1991.80px;top:841px;line-height:26px;font-size:23.50px;color:#000;transform:scaleX(0.8936);transform-origin:0 0;-webkit-text-stroke:0.48px #fff;">Бесплатное и условно-бесплатное ПО</span>
<span class="t" id="t110" style="left:2452.10px;top:841px;line-height:26px;font-size:23.50px;color:#000;transform:scaleX(0.8613);transform-origin:0 0;-webkit-text-stroke:0.48px #fff;">00:39:17</span>
<span class="t" id="t111" style="left:2551.90px;top:841px;line-height:26px;font-size:23.50px;color:#000;transform:scaleX(0.8553);transform-origin:0 0;-webkit-text-stroke:0.48px #fff;">9.21%</span>
<div class="b" style="left:1970.00px;top:881.60px;width:14.20px;height:28.70px;background:#ee5b64;"></div>
<span class="t" id="t112" style="left:1991.80px;top:883px;line-height:26px;font-size:23.50px;color:#000;transform:scaleX(0.9044);transform-origin:0 0;-webkit-text-stroke:0.48px #fff;">Интернет-порталы</span>
<span class="t" id="t113" style="left:2452.10px;top:883px;line-height:26px;font-size:23.50px;color:#000;transform:scaleX(0.8613);transform-origin:0 0;-webkit-text-stroke:0.48px #fff;">00:22:16</span>
<span class="t" id="t114" style="left:2551.90px;top:883px;line-height:26px;font-size:23.50px;color:#000;transform:scaleX(0.8553);transform-origin:0 0;-webkit-text-stroke:0.48px #fff;">5.22%</span>
<div class="b" style="left:1970.00px;top:924.15px;width:14.20px;height:28.70px;background:#ffbd59;"></div>
<span class="t" id="t115" style="left:1991.80px;top:926px;line-height:26px;font-size:23.50px;color:#000;transform:scaleX(0.8916);transform-origin:0 0;-webkit-text-stroke:0.48px #fff;">Запросы для поиска</span>
<span class="t" id="t116" style="left:2452.10px;top:926px;line-height:26px;font-size:23.50px;color:#000;transform:scaleX(0.8613);transform-origin:0 0;-webkit-text-stroke:0.48px #fff;">00:17:28</span>
<span class="t" id="t117" style="left:2551.90px;top:926px;line-height:26px;font-size:23.50px;color:#000;transform:scaleX(0.8553);transform-origin:0 0;-webkit-text-stroke:0.48px #fff;">4.09%</span>
<div class="b" style="left:1970.00px;top:966.70px;width:14.20px;height:28.70px;background:#08a19b;"></div>
<span class="t" id="t118" style="left:1991.80px;top:968px;line-height:26px;font-size:23.50px;color:#000;transform:scaleX(0.9133);transform-origin:0 0;-webkit-text-stroke:0.48px #fff;">Web почта</span>
<span class="t" id="t119" style="left:2452.10px;top:968px;line-height:26px;font-size:23.50px;color:#000;transform:scaleX(0.8613);transform-origin:0 0;-webkit-text-stroke:0.48px #fff;">00:14:28</span>
<span class="t" id="t120" style="left:2551.90px;top:968px;line-height:26px;font-size:23.50px;color:#000;transform:scaleX(0.8553);transform-origin:0 0;-webkit-text-stroke:0.48px #fff;">3.39%</span>
<div class="b" style="left:1970.00px;top:1009.25px;width:14.20px;height:28.70px;background:#ee5b64;"></div>
<span class="t" id="t121" style="left:1991.80px;top:1011px;line-height:26px;font-size:23.50px;color:#000;transform:scaleX(0.8747);transform-origin:0 0;-webkit-text-stroke:0.48px #fff;">Сайты вакансий</span>
<span class="t" id="t122" style="left:2452.10px;top:1011px;line-height:26px;font-size:23.50px;color:#000;transform:scaleX(0.8613);transform-origin:0 0;-webkit-text-stroke:0.48px #fff;">00:13:39</span>
<span class="t" id="t123" style="left:2551.90px;top:1011px;line-height:26px;font-size:23.50px;color:#000;transform:scaleX(0.8553);transform-origin:0 0;-webkit-text-stroke:0.48px #fff;">3.20%</span>
</body></html>
